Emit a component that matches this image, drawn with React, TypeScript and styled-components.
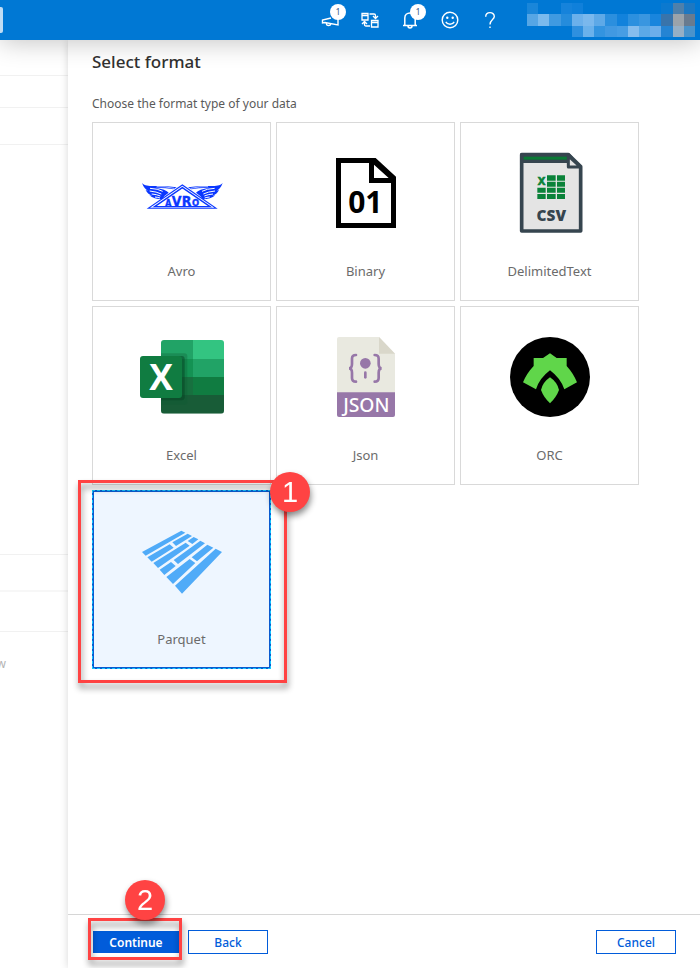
import React, { useState } from "react";
import styled, { createGlobalStyle, css } from "styled-components";

const GlobalStyle = createGlobalStyle`
  * { box-sizing: border-box; }
  body { margin: 0; background: #fff; }
  body, button { font-family: "Noto Sans", "Open Sans", sans-serif; }
`;

const Page = styled.div`
  min-height: 100vh;
  display: flex;
  flex-direction: column;
  overflow: hidden;
`;

const TopBar = styled.header`
  position: relative;
  z-index: 2;
  flex: none;
  height: 40px;
  display: flex;
  align-items: center;
  background: #0078d4;
  box-shadow: 0 2px 26px rgba(0, 0, 0, 0.24);
`;

const SearchEdge = styled.div`
  width: 3px;
  height: 26px;
  border-radius: 0 2px 2px 0;
  background: #bfdcf4;
`;

const BarActions = styled.nav`
  display: flex;
  margin-left: auto;
  margin-right: 17px;
`;

const BarButton = styled.button`
  position: relative;
  width: 40px;
  height: 40px;
  padding: 0;
  border: 0;
  background: none;
  color: #fff;
  svg { display: block; margin: 0 auto; }
`;

const Count = styled.span`
  position: absolute;
  top: 4px;
  left: 20px;
  width: 16px;
  height: 16px;
  border-radius: 50%;
  background: #fff;
  color: #3c5a8c;
  font-size: 9px;
  line-height: 16px;
  text-align: center;
`;

const Account = styled.svg`
  display: block;
  flex: none;
  margin-right: 5px;
`;

const Body = styled.div`
  flex: 1;
  display: flex;
`;

const Side = styled.aside`
  flex: none;
  width: 68px;
  overflow: hidden;
  background: #fff;
`;

const SideRow = styled.div<{ $h: number; $thick?: boolean }>`
  height: ${(p) => p.$h}px;
  border-bottom: ${(p) => (p.$thick ? 2 : 1)}px solid ${(p) => (p.$thick ? "#f7f7f7" : "#f1f1f1")};
`;

const SideText = styled.div`
  display: flex;
  justify-content: flex-end;
  width: 6px;
  margin-top: 22px;
  color: #b4b4b4;
  font-size: 12px;
  line-height: 20px;
`;

const Panel = styled.main`
  position: relative;
  flex: 1;
  min-width: 0;
  display: flex;
  flex-direction: column;
  background: #fff;
  box-shadow: 0 0 8px rgba(0, 0, 0, 0.16);
`;

const Content = styled.section`
  flex: 1;
  padding: 8px 24px 24px;
`;

const Title = styled.h1`
  margin: 0;
  color: #323130;
  font-size: 17px;
  font-weight: 500;
  line-height: 28px;
`;

const Intro = styled.p`
  margin: 18px 0 8px;
  color: #5a5a5a;
  font-size: 12px;
  line-height: 20px;
`;

const Tiles = styled.div`
  display: grid;
  grid-template-columns: repeat(auto-fill, 179px);
  gap: 5px;
`;

const Slot = styled.div`
  position: relative;
  display: flex;
`;

const Tile = styled.button<{ $selected: boolean }>`
  flex: 1;
  height: 179px;
  padding: 10px 0 0;
  display: flex;
  flex-direction: column;
  align-items: center;
  justify-content: center;
  gap: 28px;
  border: 1px solid #d9d9d9;
  background: #fff;
  color: #6b6b6b;
  font-size: 13px;
  line-height: 20px;
  svg { display: block; overflow: visible; }
  ${(p) =>
    p.$selected &&
    css`
      border: 2px solid #0a5bd0;
      outline: 1px dashed #14c8ff;
      outline-offset: -1px;
      background: #eef6ff;
    `}
`;

const Frame = styled.span<{ $inset: string }>`
  position: absolute;
  inset: ${(p) => p.$inset};
  border: 3px solid #ff4343;
  pointer-events: none;
  filter: drop-shadow(1px 5px 3px rgba(0, 0, 0, 0.45));
`;

const Marker = styled.span<{ $left: number; $top: number }>`
  position: absolute;
  left: ${(p) => p.$left}px;
  top: ${(p) => p.$top}px;
  z-index: 1;
  width: 40px;
  height: 40px;
  border-radius: 50%;
  background: #ff4343;
  color: #fff;
  font-family: "Liberation Sans", Arial, sans-serif;
  font-size: 29px;
  line-height: 41px;
  text-align: center;
  pointer-events: none;
  filter: drop-shadow(1px 4px 3px rgba(0, 0, 0, 0.45));
`;

const Footer = styled.footer`
  display: flex;
  gap: 8px;
  padding: 15px 24px 14px;
  border-top: 1px solid #d6d6d6;
`;

const Action = styled.button<{ $primary?: boolean }>`
  width: ${(p) => (p.$primary ? 88 : 80)}px;
  height: 24px;
  padding: 2px 0 0;
  border: 1px solid ${(p) => (p.$primary ? "#fff" : "#015cda")};
  background: ${(p) => (p.$primary ? "#015cda" : "#fff")};
  background-clip: padding-box;
  color: ${(p) => (p.$primary ? "#fff" : "#015cda")};
  font-size: 12px;
  font-weight: ${(p) => (p.$primary ? 600 : 500)};
  line-height: 20px;
`;

const ActionSlot = styled.div<{ $end?: boolean }>`
  position: relative;
  display: flex;
  margin-left: ${(p) => (p.$end ? "auto" : "0")};
`;

const FormatIcon = ({ box, children }: { box: string; children: React.ReactNode }) => (
  <svg width="80" height="80" viewBox={box} aria-hidden="true">
    {children}
  </svg>
);

const AvroWing = () => (
  <g>
    <path d="M36 129 C46 139 60 138 80 138 Q112 138 140 142 L130 148 Q112 143 76 143 Q108 148 116 158 Q104 165 96 178 Q72 178 58 166 L67 167 Q52 162 47 150 L54 152 Q42 146 36 129 Z" fill="#0a37ff" />
    <path d="M60 145 Q84 146 98 154 M59 153 Q80 155 94 162 M65 162 Q80 163 91 168 M75 171 Q84 172 90 174" fill="none" stroke="#fff" strokeWidth="3" />
    <path d="M80 140 Q106 139 132 145" fill="none" stroke="#fff" strokeWidth="2" />
  </g>
);

const AvroIcon = () => (
  <FormatIcon box="36 39 240 240">
    <AvroWing />
    <g transform="translate(314 0) scale(-1 1)"><AvroWing /></g>
    <path d="M50 206 L157 133 L263 206 Z" fill="#0a37ff" />
    <path d="M60 203 L157 137 L253 203 Z" fill="#fff" />
    <path d="M74 200 L157 143 L240 200 Z" fill="#fff" stroke="#0a37ff" strokeWidth="4" />
    <g fill="#0a37ff" stroke="#0a37ff" strokeWidth="1" fontFamily="Liberation Sans Narrow, DejaVu Sans Condensed, Liberation Sans, sans-serif" fontWeight="700" textAnchor="middle">
      <text x="115" y="198" fontSize="26">A</text>
      <text x="140" y="198" fontSize="42">V</text>
      <text x="170" y="198" fontSize="42">R</text>
      <text x="197" y="198" fontSize="28">O</text>
    </g>
  </FormatIcon>
);

const BinaryIcon = () => (
  <FormatIcon box="18 39 240 240">
    <path fillRule="evenodd" d="M48 54 H167 L228 110 V264 H48 Z M63 69 V249 H213 V129 H147 V69 Z M162 74 V114 H206 Z" fill="#000" />
    <text x="136" y="219" textAnchor="middle" fontFamily="Noto Sans, sans-serif" fontWeight="700" fontSize="90">01</text>
  </FormatIcon>
);

const CsvIcon = () => (
  <FormatIcon box="30 39 240 240">
    <path d="M65 44 H205 L242 80 V273 H65 Z" fill="#e4e4e4" stroke="#36454f" strokeWidth="11" strokeLinejoin="round" />
    <path d="M60 58 V44 Q60 39 65 39 H207 L218 50 V69 H60 Z" fill="#36454f" />
    <rect x="71" y="50" width="130" height="9" fill="#0a7a35" />
    <path d="M205 48 V81 H241 Z" fill="#e4e4e4" stroke="#36454f" strokeWidth="9" strokeLinejoin="round" />
    <path d="M141 106h26v16h-26z M171 106h24v16h-24z M141 125h26v15h-26z M171 125h24v15h-24z M112 143h25v15h-25z M141 143h26v15h-26z M171 143h24v15h-24z M112 162h25v15h-25z M141 162h26v15h-26z M171 162h24v15h-24z" fill="#0a8239" />
    <text x="125" y="135" textAnchor="middle" fontFamily="Noto Sans, sans-serif" fontWeight="700" fontSize="34" fill="#0a8239" stroke="#0a8239" strokeWidth="2">X</text>
    <text x="154" y="243" textAnchor="middle" fontFamily="Open Sans, sans-serif" fontWeight="800" fontSize="46" fill="#36454f">CSV</text>
  </FormatIcon>
);

const ExcelIcon = () => (
  <FormatIcon box="36 21 240 240">
    <clipPath id="sheet"><rect x="93" y="30" width="189" height="221" rx="9" /></clipPath>
    <g clipPath="url(#sheet)">
      <path d="M93 30h96v57H93z" fill="#21a366" />
      <path d="M189 30h93v57h-93z" fill="#33c481" />
      <path d="M93 87h96v54H93z" fill="#149253" />
      <path d="M189 87h93v54h-93z" fill="#21a366" />
      <path d="M93 141h96v54H93z" fill="#17703f" />
      <path d="M189 141h93v54h-93z" fill="#107c41" />
      <path d="M93 195h189v56H93z" fill="#185c37" />
      <path d="M93 70h70q9 0 9 9v136q0 9-9 9H93z" fill="#0c5b33" opacity=".3" />
      <path d="M93 78h62q9 0 9 9v115q0 9-9 9H93z" fill="#064424" opacity=".5" />
    </g>
    <rect x="30" y="78" width="126" height="126" rx="9" fill="#107c41" />
    <text x="93" y="180" textAnchor="middle" fontFamily="Open Sans, sans-serif" fontWeight="700" fontSize="106" fill="#fff">X</text>
  </FormatIcon>
);

const JsonIcon = () => (
  <FormatIcon box="18 21 240 240">
    <path d="M57 21 H177 L225 71 V190 H51 V27 Q51 21 57 21 Z" fill="#e9e9e0" />
    <path d="M177 21 L225 71 H177 Z" fill="#d9d7ca" />
    <path d="M51 187 H225 V255 Q225 261 219 261 H57 Q51 261 51 255 Z" fill="#9777a8" />
    <path d="M108 75 Q96 75 96 86 V102 Q96 115 87 115 Q96 115 96 128 V144 Q96 155 108 155 M164 75 Q176 75 176 86 V102 Q176 115 185 115 Q176 115 176 128 V144 Q176 155 164 155" fill="none" stroke="#9777a8" strokeWidth="8" strokeLinecap="round" />
    <circle cx="136" cy="100" r="16" fill="#9777a8" />
    <path d="M136 128 V142" stroke="#9777a8" strokeWidth="8" strokeLinecap="round" />
    <text x="139" y="247" textAnchor="middle" fontFamily="Noto Sans, sans-serif" fontWeight="500" fontSize="58" fill="#fff">JSON</text>
  </FormatIcon>
);

const OrcIcon = () => (
  <FormatIcon box="30 21 240 240">
    <circle cx="150" cy="141" r="120" fill="#000" />
    <path d="M150 70 L170 84 H200 V108 Q220 130 231 157 L193 178 Q182 145 150 121 Q118 145 108 178 L69 157 Q80 130 101 108 V84 H129 Z" fill="#60d64a" />
    <path d="M150 142 Q172 157 177 180 Q169 202 150 220 Q131 202 123 180 Q128 157 150 142 Z" fill="#60d64a" />
  </FormatIcon>
);

const ParquetIcon = () => (
  <FormatIcon box="216 183 240 240">
    <path
      d="M216 276 L334 212 L346 218 L227 287 Z
         M307 247 L353 221 L366 228 L318 258 Z
         M232 292 L299 253 L311 263 L245 305 Z
         M353 243 L371 231 L385 238 L367 252 Z
         M250 309 L347 248 L359 257 L264 324 Z
         M311 300 L391 242 L405 250 L324 312 Z
         M269 329 L303 306 L317 318 L283 345 Z
         M365 292 L412 254 L430 263 L381 304 Z
         M289 351 L359 297 L376 309 L309 372 Z
         M315 377 L437 266 L456 276 L336 401 Z"
      fill="#50abf8"
    />
  </FormatIcon>
);

const MegaphoneIcon = () => (
  <svg width="20" height="20" viewBox="0 0 20 20" fill="none" stroke="#fff" strokeWidth="1.4" aria-hidden="true">
    <path d="M18 4V15L5 12.500L2.500 13V10L11 8M6.500 13V14C6.500 16 10.500 16 10.800 13.800" />
  </svg>
);

const SwitchIcon = () => (
  <svg width="20" height="20" viewBox="0 0 20 20" fill="none" stroke="#fff" strokeWidth="1.3" aria-hidden="true">
    <path d="M2 3.5H8V10H2ZM2 5.5H8M11.5 10.5H18V17H11.5ZM11.5 12.5H18" />
    <path d="M9.5 4H14Q15.5 4 15.5 5.5V8M13 6L15.5 8.5L18 6M10 16H6Q4.5 16 4.5 14.5V12M2 14L4.5 11.5L7 14" />
  </svg>
);

const BellIcon = () => (
  <svg width="20" height="20" viewBox="0 0 20 20" fill="none" stroke="#fff" strokeWidth="1.5" aria-hidden="true">
    <path d="M3 15.5H17M4.8 15V8C4.8 5 7 3 10 3S15.2 5 15.2 8V15M8 16C8 18.5 12 18.5 12 16" />
  </svg>
);

const SmileIcon = () => (
  <svg width="20" height="20" viewBox="0 0 20 20" fill="none" stroke="#fff" strokeWidth="1.4" aria-hidden="true">
    <circle cx="10" cy="10" r="7.8" />
    <path d="M5.8 11.8C7.5 15 12.5 15 14.2 11.8" />
    <circle cx="7.3" cy="7.8" r="1.2" fill="#fff" stroke="none" />
    <circle cx="12.7" cy="7.8" r="1.2" fill="#fff" stroke="none" />
  </svg>
);

const HelpIcon = () => (
  <svg width="20" height="20" viewBox="0 0 20 20" fill="none" stroke="#fff" strokeWidth="1.4" aria-hidden="true">
    <path d="M5.7 6.8C5.7 1.3 14.3 1.3 14.3 6.5C14.3 9.5 10 9.7 10 14.5M10 16.5V18" />
  </svg>
);

const mosaic: (string | null)[][] = [
  ["#1a86d9", null, null, "#1683db", "#1080da", null, null, null, null, null, null, null, "#0c79cf", "#4e80ab", "#1d78c2"],
  ["#56a6e5", "#7bbaed", "#409ae1", "#258cdc", "#6bb0eb", "#7ab8ed", "#5ea9e7", "#2b8fde", "#1282dc", "#2c90df", "#3996e0", "#1985dd", "#3974ab", "#9ba3aa", "#697b8f"],
  [null, null, null, null, "#2f90df", "#6ab1eb", "#3394e0", "#4199e2", "#479de4", "#86bdee", "#5ba9e7", "#6caeeb", "#2584d3", "#96afc5", "#4a93cb"],
];

const barItems = [
  { label: "Announcements", icon: <MegaphoneIcon />, count: 1 },
  { label: "Switch workspace", icon: <SwitchIcon /> },
  { label: "Notifications", icon: <BellIcon />, count: 1 },
  { label: "Feedback", icon: <SmileIcon /> },
  { label: "Help", icon: <HelpIcon /> },
];

const formats = [
  { name: "Avro", icon: <AvroIcon /> },
  { name: "Binary", icon: <BinaryIcon /> },
  { name: "DelimitedText", icon: <CsvIcon /> },
  { name: "Excel", icon: <ExcelIcon /> },
  { name: "Json", icon: <JsonIcon /> },
  { name: "ORC", icon: <OrcIcon /> },
  { name: "Parquet", icon: <ParquetIcon /> },
];

export default function App() {
  const [selected, setSelected] = useState("Parquet");
  return (
    <Page>
      <GlobalStyle />
      <TopBar>
        <SearchEdge />
        <BarActions>
          {barItems.map((item) => (
            <BarButton key={item.label} aria-label={item.label}>
              {item.icon}
              {item.count && <Count>{item.count}</Count>}
            </BarButton>
          ))}
        </BarActions>
        <Account width="168" height="34" viewBox="0 0 15 3" preserveAspectRatio="none" shapeRendering="crispEdges" aria-hidden="true">
          {mosaic.map((row, y) =>
            row.map((fill, x) => fill && <rect key={`${x}-${y}`} x={x} y={y} width="1" height="1" fill={fill} />)
          )}
        </Account>
      </TopBar>
      <Body>
        <Side>
          <SideRow $h={36} />
          <SideRow $h={32} />
          <SideRow $h={37} />
          <SideRow $h={410} />
          <SideRow $h={37} $thick />
          <SideRow $h={40} />
          <SideText>w</SideText>
        </Side>
        <Panel>
          <Content>
            <Title>Select format</Title>
            <Intro>Choose the format type of your data</Intro>
            <Tiles>
              {formats.map((f) => (
                <Slot key={f.name}>
                  <Tile $selected={selected === f.name} aria-pressed={selected === f.name} onClick={() => setSelected(f.name)}>
                    {f.icon}
                    {f.name}
                  </Tile>
                  {f.name === "Parquet" && (
                    <>
                      <Frame $inset="-10px -16px -14px -14px" />
                      <Marker $left={178} $top={-18}>1</Marker>
                    </>
                  )}
                </Slot>
              ))}
            </Tiles>
          </Content>
          <Footer>
            <ActionSlot>
              <Action $primary>Continue</Action>
              <Frame $inset="-12px -2px -6px -4px" />
              <Marker $left={33} $top={-50}>2</Marker>
            </ActionSlot>
            <Action>Back</Action>
            <ActionSlot $end>
              <Action>Cancel</Action>
            </ActionSlot>
          </Footer>
        </Panel>
      </Body>
    </Page>
  );
}
